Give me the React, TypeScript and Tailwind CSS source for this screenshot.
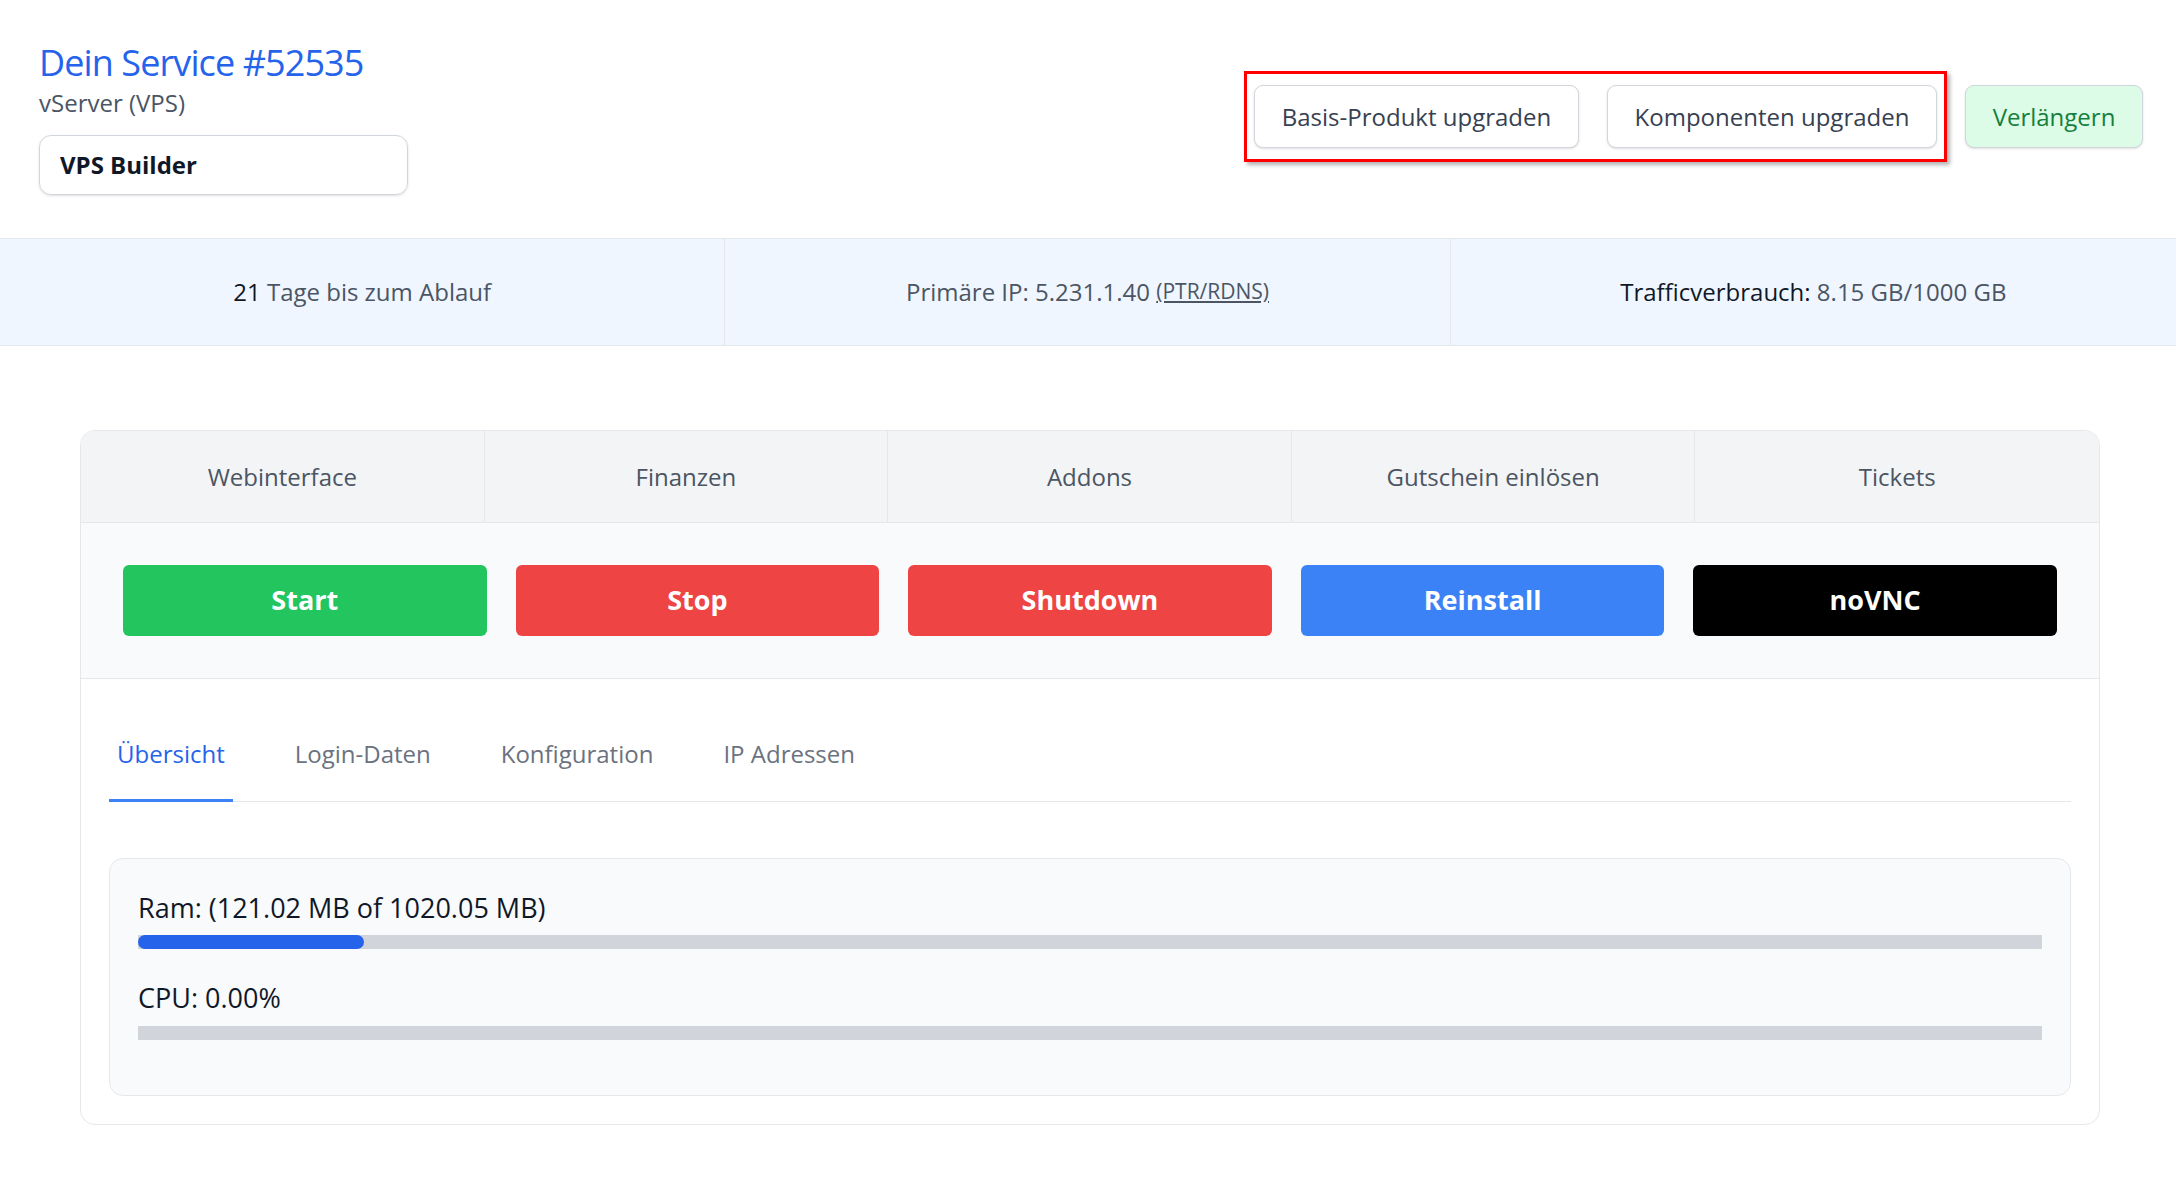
import React from "react";

const tabsTop = ["Webinterface", "Finanzen", "Addons", "Gutschein einlösen", "Tickets"];
const actions = [
  { label: "Start", cls: "bg-[#22c55e]" },
  { label: "Stop", cls: "bg-[#ef4444]" },
  { label: "Shutdown", cls: "bg-[#ef4444]" },
  { label: "Reinstall", cls: "bg-[#3b82f6]" },
  { label: "noVNC", cls: "bg-black" },
];
const subTabs = ["Übersicht", "Login-Daten", "Konfiguration", "IP Adressen"];

export default function App() {
  const ramPct = (121.02 / 1020.05) * 100;
  return (
    <div className="min-h-screen bg-white font-['Open_Sans','Noto_Sans',sans-serif]">
      {/* Header */}
      <header className="flex justify-between items-start pl-[39px] pr-[33px] pt-[39px] pb-[43px] border-b border-gray-200">
        <div className="flex flex-col">
          <h1 className="text-[36px] leading-[48px] text-[#2563eb] font-normal tracking-[-0.9px]">Dein Service #52535</h1>
          <div className="-mt-[2px] text-[24px] leading-[36px] text-[#4b5563]">vServer (VPS)</div>
          <div className="mt-[14px] w-[369px] h-[60px] border border-gray-300 rounded-[12px] shadow-sm px-[20px] flex items-center font-bold text-[24px] text-gray-900">
            VPS Builder
          </div>
        </div>
        <div className="flex items-center gap-[18px] mt-[32px]">
          <div className="flex gap-[28px] border-[3px] border-[#ff0000] shadow-[3px_3px_4px_rgba(0,0,0,0.3)] px-[7px] py-[11px]">
            <button className="w-[325px] h-[63px] border border-gray-300 rounded-[9px] bg-white text-[24px] text-[#374151] shadow-sm">
              Basis-Produkt upgraden
            </button>
            <button className="w-[330px] h-[63px] border border-gray-300 rounded-[9px] bg-white text-[24px] text-[#374151] shadow-sm">
              Komponenten upgraden
            </button>
          </div>
          <button className="w-[178px] h-[63px] border border-gray-300 rounded-[9px] bg-[#dcfce7] text-[24px] text-[#15803d] shadow-sm">
            Verlängern
          </button>
        </div>
      </header>

      {/* Stats bar */}
      <div className="grid grid-cols-3 h-[107px] bg-[#eff6ff] border-b border-gray-200">
        <div className="flex items-center justify-center border-r border-gray-200 text-[24px] text-[#4b5563]">
          <span className="text-gray-900">21</span>&nbsp;Tage bis zum Ablauf
        </div>
        <div className="flex items-center justify-center border-r border-gray-200 text-[24px] text-[#4b5563]">
          Primäre IP: 5.231.1.40&nbsp;<span className="text-[21px] underline">(PTR/RDNS)</span>
        </div>
        <div className="flex items-center justify-center text-[24px] text-[#4b5563]">
          <span className="text-gray-900">Trafficverbrauch:</span>&nbsp;8.15 GB/1000 GB
        </div>
      </div>

      {/* Main */}
      <main className="pl-[80px] pr-[76px] pt-[84px] pb-[60px]">
        <div className="border border-gray-200 rounded-[15px] overflow-hidden bg-white">
          <div className="grid grid-cols-5 h-[92px] bg-[#f3f4f6] border-b border-gray-200">
            {tabsTop.map((t, i) => (
              <div
                key={t}
                className={`flex items-center justify-center text-[24px] text-[#4b5563] ${i < 4 ? "border-r border-gray-200" : ""}`}
              >
                {t}
              </div>
            ))}
          </div>
          <div className="grid grid-cols-5 gap-[29px] p-[42px] bg-[#f9fafb] border-b border-gray-200">
            {actions.map((a) => (
              <button key={a.label} className={`h-[71px] rounded-[6px] text-white font-bold text-[27px] ${a.cls}`}>
                {a.label}
              </button>
            ))}
          </div>
          <div className="p-[28px]">
            <nav className="flex gap-[54px] border-b border-gray-200">
              {subTabs.map((t, i) => (
                <div
                  key={t}
                  className={`px-[8px] pt-[29px] pb-[27px] -mb-px text-[24px] leading-[36px] border-b-[3px] ${
                    i === 0 ? "border-[#3b82f6] text-[#2563eb]" : "border-transparent text-[#6b7280]"
                  }`}
                >
                  {t}
                </div>
              ))}
            </nav>
            <div className="mt-[56px] border border-gray-200 bg-[#f9fafb] rounded-[14px] px-[28px] pt-[28px] pb-[55px]">
              <div className="text-[27px] leading-[42px] text-gray-900">Ram: (121.02 MB of 1020.05 MB)</div>
              <div className="mt-[6px] h-[14px] bg-[#d1d5db]">
                <div className="h-full rounded-full bg-[#2563eb]" style={{ width: `${ramPct}%` }} />
              </div>
              <div className="mt-[28px] text-[27px] leading-[42px] text-gray-900">CPU: 0.00%</div>
              <div className="mt-[7px] h-[14px] bg-[#d1d5db]" />
            </div>
          </div>
        </div>
      </main>
    </div>
  );
}
